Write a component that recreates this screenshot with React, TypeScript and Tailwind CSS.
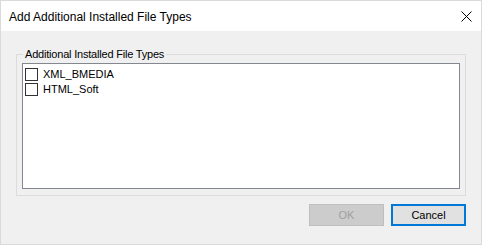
const fileTypes = ['XML_BMEDIA', 'HTML_Soft'];

export default function App() {
  return (
    <div className="w-[482px] h-[245px] flex flex-col border border-[#dadada] bg-[#f0f0f0] font-['Liberation_Sans',Arial,sans-serif] text-black">
      {/* Title bar */}
      <div className="h-[30px] bg-white flex items-center justify-between pl-[8px] pr-[9px]">
        <span className="text-[12px] leading-none pt-[1px]">Add Additional Installed File Types</span>
        <svg width="11" height="11" viewBox="0 0 11 11" className="mt-[1px]">
          <path d="M0.5 0.5 L10.5 10.5 M10.5 0.5 L0.5 10.5" stroke="#000" strokeWidth="1" fill="none" />
        </svg>
      </div>

      {/* Body */}
      <div className="flex-1 flex flex-col pt-[23px] pl-[15px] pr-[15px]">
        {/* Group box */}
        <div className="relative h-[142px] border border-[#dcdcdc] pt-[8px] px-[5px] pb-[6px]">
          <span className="absolute -top-[8px] left-[6px] px-[2px] bg-[#f0f0f0] text-[11px] leading-[14px] tracking-[-0.2px]">
            Additional Installed File Types
          </span>
          <div className="h-full border border-[#828790] bg-white pt-[3px] pl-[2px]">
            {fileTypes.map((t) =>
            <div key={t} className="h-[15px] flex items-center gap-[5px]">
                <span className="w-[13px] h-[13px] border border-[#333333] bg-white" />
                <span className="text-[11px] leading-none">{t}</span>
              </div>
            )}
          </div>
        </div>

        {/* Buttons */}
        <div className="flex justify-end gap-[7px] mt-[8px]">
          <button
            disabled
            className="w-[75px] h-[22px] border border-[#bfbfbf] bg-[#cccccc] text-[#a0a0a0] text-[11px]">
            OK
          </button>
          <button className="w-[75px] h-[22px] border-2 border-[#0078d7] bg-[#e1e1e1] text-black text-[11px]">
            Cancel
          </button>
        </div>
      </div>
    </div>);
}
